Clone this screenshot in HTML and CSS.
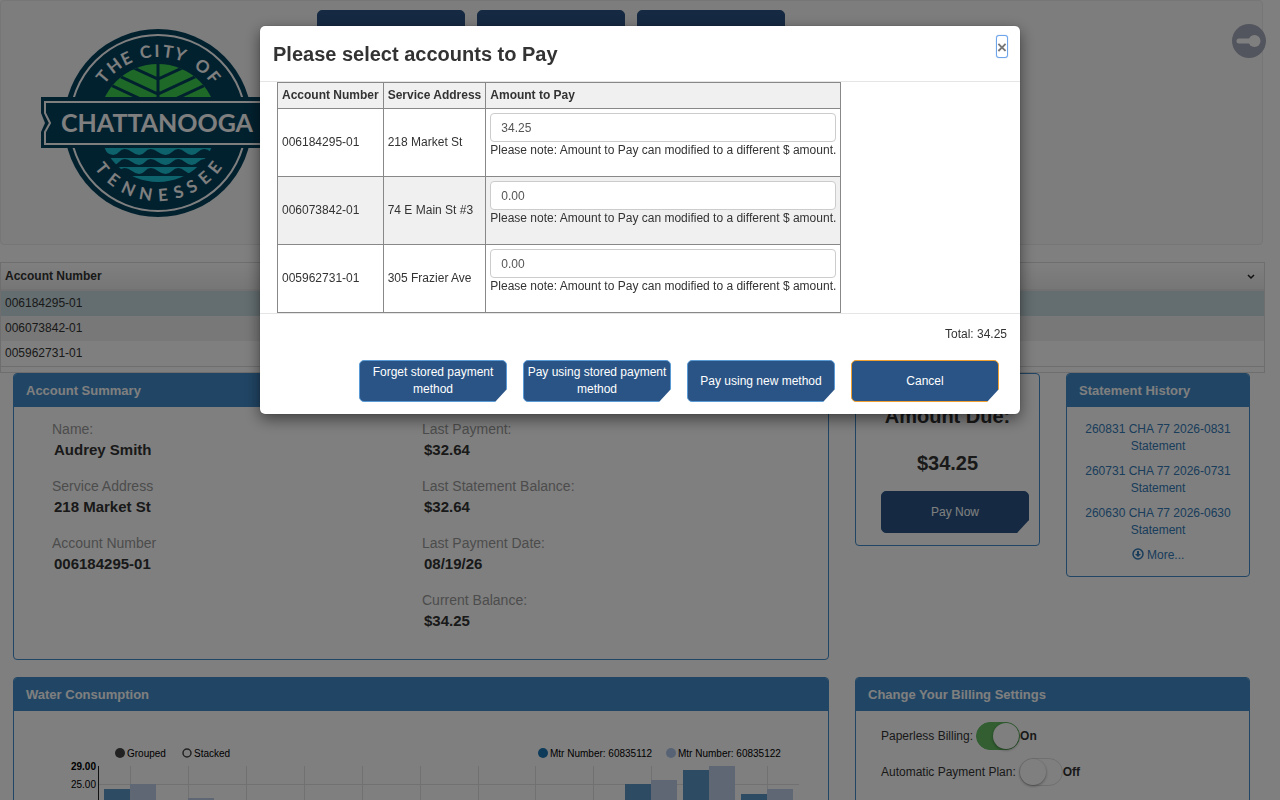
FILE: index.html
```html
<!DOCTYPE html>
<html lang="en">

<head>
    <meta charset="UTF-8">
    <meta name="viewport" content="width=device-width, initial-scale=1.0">
    <title>City of Chattanooga - My Account</title>
    <link rel="stylesheet" href="styles.css">
</head>

<body class="modal-open">

    <header class="well">
        <svg class="logo" viewBox="0 0 235 188" role="img" aria-label="The City of Chattanooga Tennessee">
            <defs>
                <clipPath id="dome"><circle cx="117" cy="94" r="59" /></clipPath>
            </defs>
            <circle cx="117" cy="94" r="94" fill="#04425e" />
            <circle cx="117" cy="94" r="88" fill="none" stroke="#fff" stroke-width="2" />
            <!-- tree -->
            <g clip-path="url(#dome)">
                <rect x="50" y="30" width="134" height="38" fill="#3cd250" />
                <g stroke="#04425e" stroke-width="3" fill="none">
                    <path d="M117 30v40M60 24l57 26 57-26M50 34l67 31 67-31M50 47l67 31 67-31" />
                </g>
                <!-- river -->
                <g fill="#1cc4d8">
                    <path d="M50 118h134v5q-7 6-14 0t-13 0-13 0-13 0-14 0-13 0-13 0-13 0-13 0-13 0z" />
                    <path d="M50 129h134v4q-7 6-14 0t-13 0-13 0-13 0-14 0-13 0-13 0-13 0-13 0-13 0z" />
                    <path d="M50 138h134v4q-7 6-14 0t-13 0-13 0-13 0-14 0-13 0-13 0-13 0-13 0-13 0z" />
                    <path d="M50 147h134v12h-134z" />
                </g>
            </g>
            <!-- banner -->
            <path d="M0 68h235v16l-4 10 4 9v16H0v-16l4-9-4-10z" fill="#04425e" />
            <path d="M4 73h227v11l-5 10 5 9v12H4v-12l5-9-5-10z" fill="none" stroke="#fff" stroke-width="2" />
            <text class="logo-name" x="116" y="103">CHATTANOOGA</text>
            <text class="logo-arc" x="63.2 71.8 83.6 92 100.1 113.4 121.2 132.3 144 152.4 164.9" y="55.4 45.5 36.9 33 30 28 28 29.5 34 37.9 48.3" rotate="-50 -37.5 -26 -18 -10 -1 8 18 28 38 50.5">THE CITY OF</text>
            <text class="logo-arc" x="53.3 65.1 78.9 97.2 117.5 134.7 149.4 163.8 175.4" y="139.2 152.4 162.4 169.7 172.2 170.1 165.1 156.5 145.9" rotate="51 38 24.5 10 -4 -16.5 -28 -40.5 -52">TENNESSEE</text>
        </svg>
        <nav class="top-nav">
            <button type="button" class="btn">Sign Out</button>
            <button type="button" class="btn">Update Profile</button>
            <button type="button" class="btn">Change Password</button>
        </nav>
    </header>

    <button type="button" class="helper" aria-label="Accessibility options">
        <svg viewBox="0 0 34 34">
            <circle cx="17" cy="17" r="17" fill="#a7aabc" />
            <path d="M7 17h14" stroke="#fff" stroke-width="5" stroke-linecap="round" />
            <circle cx="22.500" cy="17" r="6" fill="#fff" />
        </svg>
    </button>

    <div class="grid">
        <table class="grid-table">
            <thead>
                <tr>
                    <th>Account Number</th>
                    <th class="grid-toggle">
                        <svg width="8" height="6" viewBox="0 0 8 6"><path d="M1 1l3 3 3-3" fill="none" stroke="#222" stroke-width="1.500" /></svg>
                    </th>
                </tr>
            </thead>
            <tbody>
                <tr class="selected"><td colspan="2">006184295-01</td></tr>
                <tr class="alt"><td colspan="2">006073842-01</td></tr>
                <tr><td colspan="2">005962731-01</td></tr>
            </tbody>
        </table>
    </div>

    <main>
        <div class="row row-three">
            <section class="panel">
                <h2 class="panel-heading">Account Summary</h2>
                <div class="summary">
                    <dl>
                        <dt>Name:</dt>
                        <dd>Audrey Smith</dd>
                        <dt>Service Address</dt>
                        <dd>218 Market St</dd>
                        <dt>Account Number</dt>
                        <dd>006184295-01</dd>
                    </dl>
                    <dl>
                        <dt>Last Payment:</dt>
                        <dd>$32.64</dd>
                        <dt>Last Statement Balance:</dt>
                        <dd>$32.64</dd>
                        <dt>Last Payment Date:</dt>
                        <dd>08/19/26</dd>
                        <dt>Current Balance:</dt>
                        <dd>$34.25</dd>
                    </dl>
                </div>
            </section>

            <section class="panel amount">
                <h3>Amount Due:</h3>
                <h3>$34.25</h3>
                <button type="button" class="btn">Pay Now</button>
            </section>

            <section class="panel">
                <h2 class="panel-heading">Statement History</h2>
                <div class="history">
                    <a href="#">260831 CHA 77 2026-0831 Statement</a>
                    <a href="#">260731 CHA 77 2026-0731 Statement</a>
                    <a href="#">260630 CHA 77 2026-0630 Statement</a>
                    <a href="#" class="more">
                        <svg width="12" height="12" viewBox="0 0 12 12">
                            <circle cx="6" cy="6" r="5" fill="none" stroke="currentColor" stroke-width="1.500" />
                            <path d="M5 3h2v3h2L6 9 3 6h2z" fill="currentColor" />
                        </svg>
                        More...</a>
                </div>
            </section>
        </div>

        <div class="row row-two">
            <section class="panel">
                <h2 class="panel-heading">Water Consumption</h2>
                <svg class="chart" width="760" height="260" viewBox="0 0 760 260">
                    <g stroke="#e3e3e3">
                        <path d="M76.500 25v200M134.500 25v200M192.500 25v200M250.500 25v200M308.500 25v200M366.500 25v200M424.500 25v200M481.500 25v200M539.500 25v200M597.500 25v200M655.500 25v200M713.500 25v200" />
                        <path d="M45 43.500h700" />
                    </g>
                    <path d="M44.500 25v200" stroke="#222" />
                    <g fill="#5a96c4">
                        <rect x="50" y="48" width="26" height="177" />
                        <rect x="571" y="43" width="26" height="182" />
                        <rect x="629" y="29" width="26" height="196" />
                        <rect x="687" y="53" width="26" height="172" />
                    </g>
                    <g fill="#c0cee8">
                        <rect x="76" y="43" width="26" height="182" />
                        <rect x="134" y="57" width="26" height="168" />
                        <rect x="597" y="39" width="26" height="186" />
                        <rect x="655" y="25" width="26" height="200" />
                        <rect x="713" y="48" width="26" height="177" />
                    </g>
                    <circle cx="66" cy="12" r="5" fill="#444" />
                    <text x="73" y="16">Grouped</text>
                    <circle cx="133" cy="12" r="4" fill="none" stroke="#444" stroke-width="1.500" />
                    <text x="140" y="16">Stacked</text>
                    <circle cx="489" cy="12" r="5" fill="#1f77b4" />
                    <text x="496" y="16">Mtr Number: 60835112</text>
                    <circle cx="617" cy="12" r="5" fill="#aec7e8" />
                    <text x="624" y="16">Mtr Number: 60835122</text>
                    <text class="axis axis-max" x="42" y="29">29.00</text>
                    <text class="axis" x="42" y="47">25.00</text>
                </svg>
            </section>

            <section class="panel">
                <h2 class="panel-heading">Change Your Billing Settings</h2>
                <div class="settings">
                    <div class="setting">
                        <label for="paperless">Paperless Billing:</label>
                        <input type="checkbox" class="switch" id="paperless" checked>
                        <b>On</b>
                    </div>
                    <div class="setting">
                        <label for="autopay">Automatic Payment Plan:</label>
                        <input type="checkbox" class="switch" id="autopay">
                        <b>Off</b>
                    </div>
                </div>
            </section>
        </div>
    </main>

    <div class="backdrop">
        <form class="modal" role="dialog" aria-labelledby="modal-title">
            <div class="modal-header">
                <h1 id="modal-title">Please select accounts to Pay</h1>
                <button type="button" class="close" aria-label="Close">&times;</button>
            </div>
            <div class="modal-body">
                <table class="pay-table">
                    <thead>
                        <tr>
                            <th>Account Number</th>
                            <th>Service Address</th>
                            <th>Amount to Pay</th>
                        </tr>
                    </thead>
                    <tbody>
                        <tr>
                            <td>006184295-01</td>
                            <td>218 Market St</td>
                            <td>
                                <input type="text" id="amt1" value="34.25">
                                <label for="amt1">Please note: Amount to Pay can modified to a different $ amount.</label>
                            </td>
                        </tr>
                        <tr>
                            <td>006073842-01</td>
                            <td>74 E Main St #3</td>
                            <td>
                                <input type="text" id="amt2" value="0.00">
                                <label for="amt2">Please note: Amount to Pay can modified to a different $ amount.</label>
                            </td>
                        </tr>
                        <tr>
                            <td>005962731-01</td>
                            <td>305 Frazier Ave</td>
                            <td>
                                <input type="text" id="amt3" value="0.00">
                                <label for="amt3">Please note: Amount to Pay can modified to a different $ amount.</label>
                            </td>
                        </tr>
                    </tbody>
                </table>
            </div>
            <div class="modal-footer">
                <p class="total">Total: 34.25</p>
                <div class="modal-buttons">
                    <button type="button" class="btn">Forget stored payment method</button>
                    <button type="button" class="btn">Pay using stored payment method</button>
                    <button type="button" class="btn">Pay using new method</button>
                    <button type="button" class="btn btn-cancel">Cancel</button>
                </div>
            </div>
        </form>
    </div>

</body>

</html>
```
FILE: styles.css
```css
* {
    box-sizing: border-box;
}

body {
    margin: 0;
    font: 12px/17px "Liberation Sans", Arial, sans-serif;
    color: #333;
    background: #fff;
}

.modal-open {
    height: 100vh;
    overflow: hidden;
}

button,
input {
    font-family: inherit;
    font-size: 12px;
}

a {
    color: #337ab7;
    text-decoration: none;
}

.btn {
    width: 148px;
    height: 42px;
    padding: 0;
    line-height: 17px;
    color: #fff;
    background: #2a5485;
    border: 1px solid #5b9bd5;
    border-radius: 5px;
    /* cut the bottom right corner */
    clip-path: polygon(0 0, 100% 0, 100% calc(100% - 13px), calc(100% - 12px) 100%, 0 100%);
}

/* header */
.well {
    display: flex;
    align-items: flex-start;
    gap: 41px;
    height: 245px;
    margin-right: 17px;
    padding: 9px 0 0 40px;
    background: #fafafa;
    border: 1px solid #ececec;
    border-radius: 4px;
}

.logo {
    flex: none;
    width: 235px;
    height: 188px;
    margin-top: 19px;
}

.logo-name {
    font: bold 25px Lato, sans-serif;
    fill: #fff;
    text-anchor: middle;
}

.logo-arc {
    font: bold 17px Lato, sans-serif;
    fill: #fff;
}

.top-nav {
    display: flex;
    gap: 12px;
}

.top-nav .btn,
.amount .btn {
    border-color: #2a5485;
}

.helper {
    position: fixed;
    top: 24px;
    right: 14px;
    width: 34px;
    height: 34px;
    padding: 0;
    background: none;
    border: 0;
}

.helper svg {
    display: block;
}

/* account list */
.grid {
    margin: 17px 15px 0 0;
    padding-bottom: 5px;
    border: 1px solid #ddd;
}

.grid-table {
    width: 100%;
    border-collapse: separate;
    border-spacing: 0;
    border-bottom: 1px solid #ddd;
}

.grid-table th {
    height: 28px;
    padding: 0 4px;
    text-align: left;
    background: linear-gradient(#fff, #ececec);
    border-bottom: 2px solid #e2e2e2;
}

.grid-table .grid-toggle {
    padding-right: 9px;
    text-align: right;
}

.grid-table td {
    height: 25px;
    padding: 0 4px;
}

.grid-table .alt {
    background: #f0f0f0;
}

.grid-table .selected {
    background: #c8dce0;
}

/* panels */
.row {
    display: grid;
    align-items: start;
    gap: 26px;
    margin: 0 30px 17px 13px;
}

.row-three {
    grid-template-columns: minmax(0, 1fr) 185px 184px;
}

.row-two {
    grid-template-columns: minmax(0, 1fr) 395px;
}

.panel {
    overflow: hidden;
    border: 1px solid #428bca;
    border-radius: 4px;
}

.panel-heading {
    margin: 0;
    padding: 8px 12px;
    font-size: 13px;
    line-height: 17px;
    color: #fff;
    background: #428bca;
}

.summary {
    display: grid;
    grid-template-columns: 370px 1fr;
    height: 252px;
    padding: 12px 0 0 38px;
}

.summary dl {
    margin: 0;
}

.summary dt {
    font-size: 14px;
    line-height: 20px;
    color: #999;
}

.summary dd {
    margin: 0 0 15px 2px;
    font-size: 15px;
    line-height: 22px;
    font-weight: bold;
}

.amount {
    height: 173px;
    padding: 30px 10px 0;
}

.amount h3 {
    margin: 0 0 23px;
    font-size: 20px;
    line-height: 24px;
    text-align: center;
}

.amount h3 + h3 {
    margin-bottom: 16px;
}

.amount .btn {
    display: block;
    margin-left: auto;
}

.history {
    padding: 14px 13px 12px;
    text-align: center;
}

.history a {
    display: block;
    margin-bottom: 8px;
}

.history .more {
    margin: 0;
}

.more svg {
    vertical-align: -1px;
}

.chart {
    display: block;
    margin: 30px 0 0 40px;
    font-size: 10px;
}

.axis {
    text-anchor: end;
}

.axis-max {
    font-weight: bold;
}

.settings {
    padding: 11px 25px 40px;
}

.setting {
    display: flex;
    align-items: center;
    height: 28px;
    margin-bottom: 8px;
}

.switch {
    appearance: none;
    width: 44px;
    height: 28px;
    margin: 0 0 0 3px;
    border: 1px solid #dfdfdf;
    border-radius: 14px;
    background: #fff;
}

.switch::before {
    content: "";
    display: block;
    width: 26px;
    height: 26px;
    border-radius: 50%;
    background: #fff;
    box-shadow: 0 1px 3px rgba(0, 0, 0, 0.4);
}

.switch:checked {
    background: #64bd63;
    border-color: #64bd63;
}

.switch:checked::before {
    margin-left: auto;
}

/* modal */
.backdrop {
    position: fixed;
    inset: 0;
    padding: 26px 0;
    background: rgba(0, 0, 0, 0.5);
}

.modal {
    width: 760px;
    max-width: 100%;
    margin: 0 auto;
    background: #fff;
    border-radius: 5px;
    box-shadow: 0 5px 15px rgba(0, 0, 0, 0.5), 0 0 1px rgba(0, 0, 0, 0.5);
}

.modal-header {
    display: flex;
    justify-content: space-between;
    align-items: flex-start;
    height: 56px;
    padding: 9px 12px 0 13px;
    border-bottom: 1px solid #e5e5e5;
}

.modal-header h1 {
    margin: 6px 0 0;
    font-size: 20px;
    line-height: 26px;
}

.close {
    display: flex;
    justify-content: center;
    width: 12px;
    height: 23px;
    padding: 3px 0 0;
    font-size: 17px;
    line-height: 18px;
    font-weight: bold;
    color: #777;
    background: #fff;
    border: 1px solid #6ea5ea;
    border-radius: 3px;
    box-shadow: 0 0 1px #6ea5ea;
}

.modal-body {
    padding: 0 17px;
}

.pay-table {
    border-collapse: collapse;
    white-space: nowrap;
}

.pay-table th,
.pay-table td {
    padding: 4px;
    text-align: left;
    border: 1px solid #888;
}

.pay-table th {
    background: #f0f0f0;
}

.pay-table td {
    height: 68px;
}

.pay-table tbody tr:nth-child(even) {
    background: #f0f0f0;
}

.pay-table input {
    display: block;
    width: 100%;
    height: 29px;
    padding: 0 10px;
    color: #555;
    border: 1px solid #ccc;
    border-radius: 4px;
}

.pay-table label {
    display: block;
    margin-bottom: 13px;
}

.modal-footer {
    padding: 12px 13px;
    border-top: 1px solid #e5e5e5;
}

.total {
    margin: 0 0 17px;
    text-align: right;
}

.modal-buttons {
    display: flex;
    justify-content: flex-end;
    gap: 16px;
    padding-right: 8px;
}

.btn-cancel {
    border-color: #f0a030;
}
```
